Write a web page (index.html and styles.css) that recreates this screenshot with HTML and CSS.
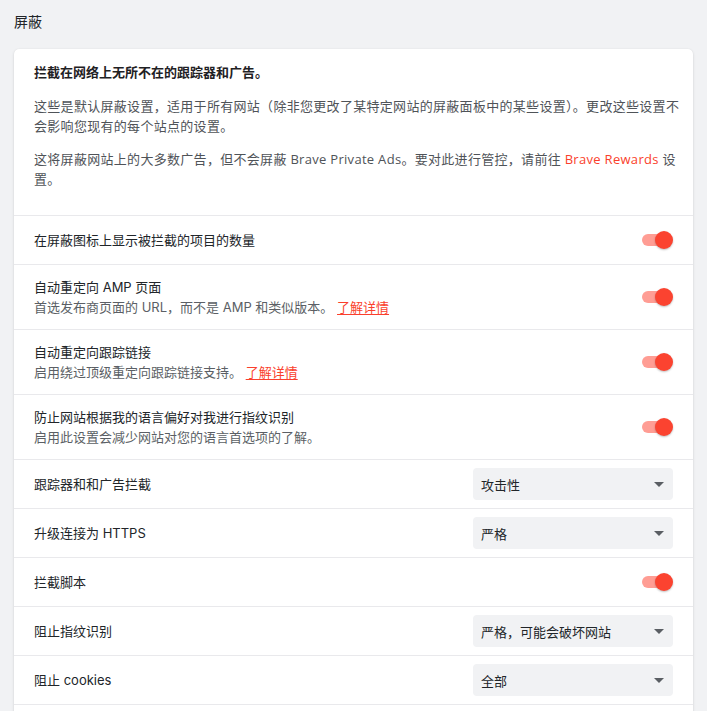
FILE: index.html
```html
<!DOCTYPE html>
<html lang="zh-CN">
<head>
<meta charset="utf-8">
<title>屏蔽</title>
<link rel="stylesheet" href="styles.css">
</head>
<body>
<div class="page">
  <h1 class="page-title">屏蔽</h1>
  <section class="card">
    <div class="intro">
      <p class="intro-head">拦截在网络上无所不在的跟踪器和广告。</p>
      <p class="intro-text">这些是默认屏蔽设置，适用于所有网站（除非您更改了某特定网站的屏蔽面板中的某些设置）。更改这些设置不会影响您现有的每个站点的设置。</p>
      <p class="intro-text">这将屏蔽网站上的大多数广告，但不会屏蔽 Brave Private Ads。要对此进行管控，请前往 <a class="rewards">Brave Rewards</a> 设置。</p>
    </div>

    <div class="row">
      <div class="label"><div class="title">在屏蔽图标上显示被拦截的项目的数量</div></div>
      <div class="toggle"><span class="track"></span><span class="knob"></span></div>
    </div>

    <div class="row">
      <div class="label">
        <div class="title">自动重定向 AMP 页面</div>
        <div class="sub">首选发布商页面的 URL，而不是 AMP 和类似版本。 <a class="learn">了解详情</a></div>
      </div>
      <div class="toggle"><span class="track"></span><span class="knob"></span></div>
    </div>

    <div class="row">
      <div class="label">
        <div class="title">自动重定向跟踪链接</div>
        <div class="sub">启用绕过顶级重定向跟踪链接支持。 <a class="learn">了解详情</a></div>
      </div>
      <div class="toggle"><span class="track"></span><span class="knob"></span></div>
    </div>

    <div class="row">
      <div class="label">
        <div class="title">防止网站根据我的语言偏好对我进行指纹识别</div>
        <div class="sub">启用此设置会减少网站对您的语言首选项的了解。</div>
      </div>
      <div class="toggle"><span class="track"></span><span class="knob"></span></div>
    </div>

    <div class="row">
      <div class="label"><div class="title">跟踪器和和广告拦截</div></div>
      <div class="select"><span>攻击性</span><span class="caret"></span></div>
    </div>

    <div class="row">
      <div class="label"><div class="title">升级连接为 HTTPS</div></div>
      <div class="select"><span>严格</span><span class="caret"></span></div>
    </div>

    <div class="row">
      <div class="label"><div class="title">拦截脚本</div></div>
      <div class="toggle"><span class="track"></span><span class="knob"></span></div>
    </div>

    <div class="row">
      <div class="label"><div class="title">阻止指纹识别</div></div>
      <div class="select"><span>严格，可能会破坏网站</span><span class="caret"></span></div>
    </div>

    <div class="row row-last">
      <div class="label"><div class="title">阻止 cookies</div></div>
      <div class="select"><span>全部</span><span class="caret"></span></div>
    </div>
    <div class="card-end"></div>
  </section>
</div>
</body>
</html>
```

FILE: styles.css
```css
* { box-sizing: border-box; }

html, body {
  margin: 0;
  padding: 0;
  background: #f1f2f4;
}

body {
  font-family: Inter, "Noto Sans CJK SC", sans-serif;
  color: #212529;
  font-size: 13px;
}

.page {
  padding: 14px 14px 40px 14px;
}

.page-title {
  margin: 0 0 19px 0;
  font-size: 14px;
  line-height: 16px;
  font-weight: 400;
  color: #212529;
}

.card {
  background: #ffffff;
  border-radius: 5px;
  box-shadow: 0 1px 3px rgba(0, 0, 0, 0.12), 0 0 1px rgba(0, 0, 0, 0.08);
}

.intro {
  padding: 13px 10px 26px 20px;
  font-family: "Open Sans", "Noto Sans CJK SC", sans-serif;
}

.intro p {
  margin: 0;
  line-height: 20px;
}

.intro-head {
  font-weight: 700;
  font-size: 13px;
  color: #1f2124;
}

.intro-text {
  margin-top: 14px !important;
  color: #4f5358;
  letter-spacing: 0.3px;
}

.intro-text + .intro-text {
  margin-top: 13px !important;
}

.rewards {
  color: #fa3f2c;
  text-decoration: none;
}

.row {
  display: flex;
  align-items: center;
  justify-content: space-between;
  min-height: 49px;
  padding: 12px 20px;
  border-top: 1px solid #e9e9ec;
}

.row-last {
  border-bottom: 1px solid #e9e9ec;
}

.card-end {
  height: 24px;
}

.label {
  display: flex;
  flex-direction: column;
}

.title {
  line-height: 20px;
  color: #212529;
}

.sub {
  line-height: 20px;
  color: #5b5f65;
}

.learn {
  color: #fa3f2c;
  text-decoration: underline;
  text-underline-offset: 2px;
}

.toggle {
  position: relative;
  width: 31px;
  height: 18px;
  flex: none;
}

.track {
  position: absolute;
  left: 0;
  top: 3px;
  width: 28px;
  height: 12px;
  border-radius: 6px;
  background: #ff9d94;
}

.knob {
  position: absolute;
  right: 0;
  top: 0;
  width: 18px;
  height: 18px;
  border-radius: 50%;
  background: #fb4330;
  box-shadow: 0 1px 2px rgba(0, 0, 0, 0.25);
}

.select {
  flex: none;
  display: flex;
  align-items: center;
  justify-content: space-between;
  width: 200px;
  height: 32px;
  margin: -4px 0;
  padding: 0 9px 0 8px;
  border-radius: 4px;
  background: #f1f2f4;
  color: #212529;
}

.caret {
  width: 0;
  height: 0;
  border-left: 5px solid transparent;
  border-right: 5px solid transparent;
  border-top: 5px solid #5a5e63;
}
```
